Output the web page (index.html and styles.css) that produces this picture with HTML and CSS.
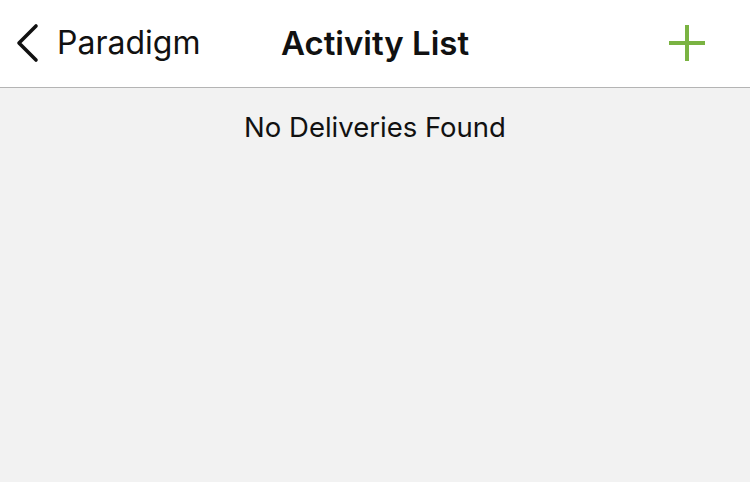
FILE: index.html
```html
<!DOCTYPE html>
<html>
<head>
<meta charset="utf-8">
<link rel="stylesheet" href="styles.css">
</head>
<body>
<div class="screen">
  <header class="navbar">
    <div class="nav-left">
      <svg class="chevron" width="28" height="42" viewBox="0 0 28 42">
        <path d="M22 4 L5 21 L22 38" fill="none" stroke="#111" stroke-width="3.6" stroke-linecap="round" stroke-linejoin="round"/>
      </svg>
      <span class="back-label">Paradigm</span>
    </div>
    <h1 class="title">Activity List</h1>
    <div class="nav-right">
      <svg class="plus" width="36" height="36" viewBox="0 0 36 36">
        <path d="M18 0 V36 M0 18 H36" fill="none" stroke="#7ab342" stroke-width="4"/>
      </svg>
    </div>
  </header>
  <main class="content">
    <p class="empty">No Deliveries Found</p>
  </main>
</div>
</body>
</html>
```
FILE: styles.css
```css
html, body {
  margin: 0;
  padding: 0;
}
body {
  width: 750px;
  height: 482px;
  overflow: hidden;
  font-family: Inter, "Liberation Sans", sans-serif;
  color: #111;
}
.screen {
  display: flex;
  flex-direction: column;
  height: 482px;
}
.navbar {
  height: 88px;
  box-sizing: border-box;
  background: #fff;
  border-bottom: 1px solid #b4b4b4;
  display: grid;
  grid-template-columns: 1fr auto 1fr;
  align-items: center;
  padding: 0 0 2px 0;
}
.nav-left {
  display: flex;
  align-items: center;
  gap: 15px;
  padding-left: 14px;
}
.chevron {
  display: block;
}
.back-label {
  font-size: 32px;
  font-weight: 400;
}
.title {
  margin: 0;
  font-size: 33px;
  font-weight: 600;
}
.nav-right {
  display: flex;
  justify-content: flex-end;
  padding-right: 45px;
}
.plus {
  display: block;
}
.content {
  flex: 1;
  background: #f2f2f2;
  display: flex;
  flex-direction: column;
  align-items: center;
}
.empty {
  margin: 22px 0 0;
  font-size: 27.5px;
}
```
